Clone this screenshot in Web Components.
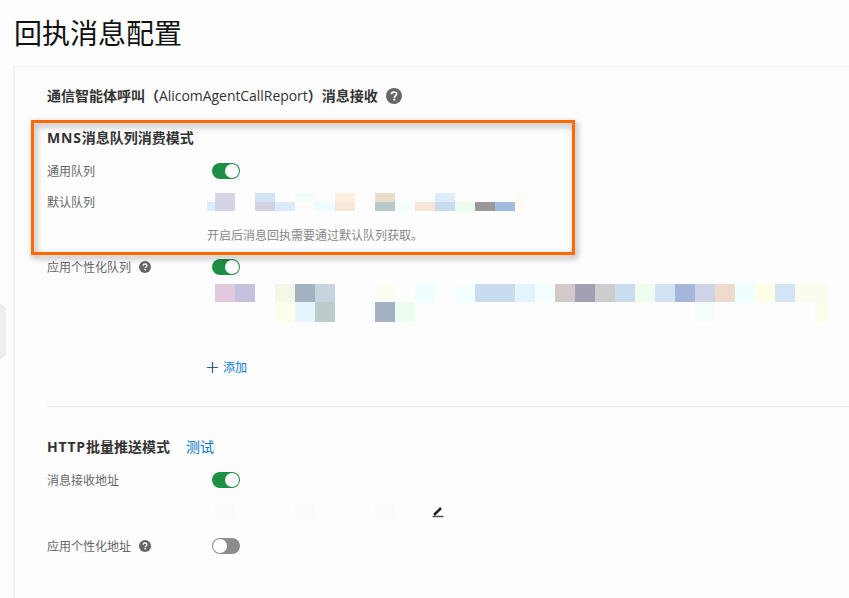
<!DOCTYPE html>
<html lang="zh">
<head>
<meta charset="utf-8">
<title>回执消息配置</title>
<style>
    html, body {
        margin: 0;
        height: 598px;
        overflow: hidden;
        background: #fdfdfd;
        font-family: "Open Sans", "Noto Sans CJK SC", sans-serif;
    }
    .caps { letter-spacing: .8px; }
    .name { font-weight: 500; letter-spacing: -.05px; white-space: pre; }
</style>
</head>
<body>
<side-handle></side-handle>
<page-title>回执消息配置</page-title>
<config-card>
    <section-title>通信智能体呼叫（<span class="name">AlicomAgentCallReport</span>）消息接收<help-icon size="16"></help-icon></section-title>

    <call-out>
        <section-title><span class="caps">MNS</span>消息队列消费模式</section-title>
        <form-row top="15" label="通用队列"><toggle-switch on></toggle-switch></form-row>
        <form-row top="14" label="默认队列">
            <blur-strip cols="8px repeat(15,20px) 10px" heights="9px 9px"
                rows="- d5d3e6 - d2e3f4 - f3fdfb - fdeee0 - ecdccb - fdfdfd dcecfc - - - fdfdf5|ddeeff d5d3e6 - d5d1e4 ddeafa - eefcfd f8e7d8 - b9c9c8 f5fdfd f7e6d8 c9dcee ecfcef 999999 a1bbdf fdfdf5"></blur-strip>
        </form-row>
        <form-row top="13" label=""><hint-text>开启后消息回执需要通过默认队列获取。</hint-text></form-row>
    </call-out>

    <form-row top="4" label="应用个性化队列" help><toggle-switch on></toggle-switch></form-row>
    <form-row top="9" label="">
        <blur-strip cols="8px repeat(30,20px) 13px" heights="18px 20px 20px"
            rows="- e1c9dd c6c2dd - f4f6e6 a2b2c2 c7d4e0 - - fdfdf3 - efffff - f4ffff c9dcee c9dcee e4f4fd f3fffd d4c9c9 a2a0b2 cdcdcd cadcef eefdee d1e3f5 a4b6d9 ced3e7 eddccb efffff feffe6 d2e4f6 f9fdee f9fdee|- - - - fdffee e5f5fd bccccb - - a2b2c2 edfdee - - - - - - - - - - - - - - f5fdfd - - - - - fdfdee"></blur-strip>
    </form-row>
    <form-row top="15" label=""><add-link>添加</add-link></form-row>

    <hr-line></hr-line>

    <section-title><span class="caps">HTTP</span>批量推送模式<text-link>测试</text-link></section-title>
    <form-row top="15" label="消息接收地址"><toggle-switch on></toggle-switch></form-row>
    <form-row top="15" label="">
        <blur-strip cols="8px repeat(9,20px) 37px 16px" heights="16px"
            rows="- fbfbfb - - - fbfbfb - - - fbfbfb - -"></blur-strip>
        <edit-icon></edit-icon>
    </form-row>
    <form-row top="19" label="应用个性化地址" help><toggle-switch></toggle-switch></form-row>
</config-card>

<script>
class sideHandle extends HTMLElement {
    connectedCallback() {
        this.attachShadow({mode:'open'}).innerHTML = `
            <style>
            :host { position: absolute; left: 0; top: 303px; width: 6px; height: 57px; background: #eeeeee;
                clip-path: polygon(0 0, 100% 5px, 100% calc(100% - 5px), 0 100%); }
            </style>`;
    }
}

class pageTitle extends HTMLElement {
    connectedCallback() {
        this.attachShadow({mode:'open'}).innerHTML = `
            <style>
            :host { display: block; height: 66px; line-height: 66px; padding-left: 14px;
                font-size: 28px; color: #111; }
            </style>
            <slot></slot>`;
    }
}

class configCard extends HTMLElement {
    connectedCallback() {
        this.attachShadow({mode:'open'}).innerHTML = `
            <style>
            :host { display: block; margin-left: 13px; width: 836px; height: 532px; box-sizing: border-box;
                border-left: 2px solid #f2f2f2; border-top: 1px solid #f3f3f3;
                padding: 19px 0 0 32px; background: #fdfdfd; }
            </style>
            <slot></slot>`;
    }
}

class sectionTitle extends HTMLElement {
    connectedCallback() {
        this.attachShadow({mode:'open'}).innerHTML = `
            <style>
            :host { display: flex; align-items: center; height: 20px; line-height: 20px; font-size: 14px;
                font-weight: 700; color: #333; white-space: nowrap; }
            ::slotted(help-icon) { margin-left: 8px; }
            ::slotted(text-link) { margin-left: 16px; }
            </style>
            <slot></slot>`;
    }
}

class callOut extends HTMLElement {
    connectedCallback() {
        this.attachShadow({mode:'open'}).innerHTML = `
            <style>
            :host { display: block; position: relative; box-sizing: border-box; width: 544px; height: 135px;
                margin: 14px 0 0 -16px; padding: 8px 0 0 16px; }
            .frame { position: absolute; inset: 0; border: 3px solid #ff6a00; pointer-events: none;
                filter: drop-shadow(2px 3px 3px rgba(0,0,0,.4)); }
            </style>
            <slot></slot>
            <div class="frame"></div>`;
    }
}

class formRow extends HTMLElement {
    connectedCallback() {
        var label = this.getAttribute("label") || "";
        var help = this.hasAttribute("help") ? '<help-icon size="12"></help-icon>' : '';
        this.attachShadow({mode:'open'}).innerHTML = `
            <style>
            :host { display: flex; align-items: center; margin-top: ${this.getAttribute("top") || 0}px; }
            .label { display: flex; align-items: flex-start; gap: 8px; flex: none; width: 160px; height: 16px;
                font-size: 12px; line-height: 18px; color: #666; white-space: nowrap; }
            help-icon { align-self: center; }
            .value { display: flex; align-items: center; }
            </style>
            <div class="label">${label}${help}</div>
            <div class="value"><slot></slot></div>`;
    }
}

class toggleSwitch extends HTMLElement {
    connectedCallback() {
        this.attachShadow({mode:'open'}).innerHTML = `
            <style>
            :host { display: flex; box-sizing: border-box; width: 28px; height: 16px; margin-left: 5px;
                padding: 1px; border-radius: 8px; background: #8c8c8c; justify-content: flex-start; }
            :host([on]) { background: #1f8f45; justify-content: flex-end; }
            .knob { width: 14px; height: 14px; border-radius: 50%; background: #fff; }
            </style>
            <div class="knob"></div>`;
    }
}

class helpIcon extends HTMLElement {
    connectedCallback() {
        var size = this.getAttribute("size") || 16;
        this.attachShadow({mode:'open'}).innerHTML = `
            <style>
            :host { display: inline-flex; flex: none; width: ${size}px; height: ${size}px; }
            </style>
            <svg viewBox="0 0 16 16" width="${size}" height="${size}">
                <circle cx="8" cy="8" r="8" fill="#666"/>
                <path d="M5.4 6.3C5.5 4.7 6.6 4 8 4c1.5 0 2.6.8 2.6 2.1 0 1.9-2.3 1.9-2.3 3.6" fill="none" stroke="#fff" stroke-width="1.7"/>
                <rect x="7.3" y="10.6" width="2" height="1.9" fill="#fff"/>
            </svg>`;
    }
}

class editIcon extends HTMLElement {
    connectedCallback() {
        this.attachShadow({mode:'open'}).innerHTML = `
            <style>
            :host { display: flex; flex: none; width: 12px; height: 12px; margin: 2px 0 0 -16px; }
            </style>
            <svg viewBox="0 0 12 12" width="12" height="12">
                <path d="M2 9 9 2" stroke="#222" stroke-width="2.5" fill="none"/>
                <path d="M.5 10.5h11" stroke="#444" stroke-width="1.3" fill="none"/>
            </svg>`;
    }
}

// pixelated blocks that hide the queue names and addresses
class blurStrip extends HTMLElement {
    connectedCallback() {
        var cells = "";
        this.getAttribute("rows").split("|").forEach((row) => {
            row.split(" ").forEach((color) => {
                cells += color == "-" ? "<i></i>" : `<i style="background:#${color}"></i>`;
            });
        });
        this.attachShadow({mode:'open'}).innerHTML = `
            <style>
            :host { display: grid; grid-template-columns: ${this.getAttribute("cols")};
                grid-template-rows: ${this.getAttribute("heights")}; }
            </style>
            ${cells}`;
    }
}

class hintText extends HTMLElement {
    connectedCallback() {
        this.attachShadow({mode:'open'}).innerHTML = `
            <style>
            :host { display: block; height: 20px; line-height: 23px; font-size: 12px; color: #888; white-space: nowrap; }
            </style>
            <slot></slot>`;
    }
}

class addLink extends HTMLElement {
    connectedCallback() {
        this.attachShadow({mode:'open'}).innerHTML = `
            <style>
            :host { display: flex; align-items: center; gap: 5px; height: 20px; font-size: 12px; color: #0a7cd6; }
            svg { flex: none; }
            </style>
            <svg viewBox="0 0 11 11" width="11" height="11"><path d="M5.5 0v11M0 5.5h11" stroke="#2a5f8f" stroke-width="1.2"/></svg>
            <slot></slot>`;
    }
}

class textLink extends HTMLElement {
    connectedCallback() {
        this.attachShadow({mode:'open'}).innerHTML = `
            <style>
            :host { font-size: 14px; font-weight: 400; color: #0077cc; }
            </style>
            <slot></slot>`;
    }
}

class hrLine extends HTMLElement {
    connectedCallback() {
        this.attachShadow({mode:'open'}).innerHTML = `
            <style>
            :host { display: block; height: 1px; margin: 29px 0 30px; background: #e3e3e3; }
            </style>`;
    }
}

customElements.define("side-handle", sideHandle);
customElements.define("page-title", pageTitle);
customElements.define("config-card", configCard);
customElements.define("section-title", sectionTitle);
customElements.define("call-out", callOut);
customElements.define("form-row", formRow);
customElements.define("toggle-switch", toggleSwitch);
customElements.define("help-icon", helpIcon);
customElements.define("edit-icon", editIcon);
customElements.define("blur-strip", blurStrip);
customElements.define("hint-text", hintText);
customElements.define("add-link", addLink);
customElements.define("text-link", textLink);
customElements.define("hr-line", hrLine);
</script>
</body>
</html>
